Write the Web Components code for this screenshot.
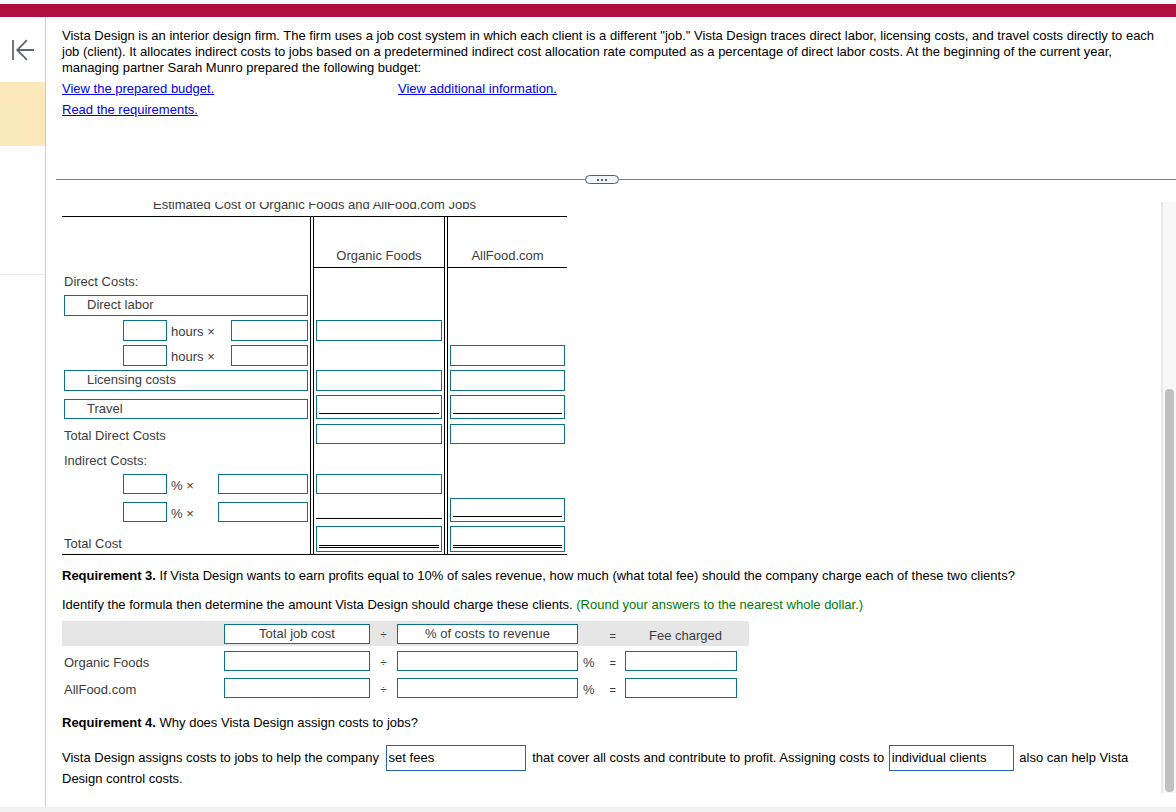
<!DOCTYPE html>
<html><head><meta charset="utf-8"><title>Vista Design</title>
<style>
html,body{margin:0;padding:0;background:#fff;height:100%;overflow:hidden}
body{font:13px/16px "Liberation Sans",Arial,sans-serif;color:#000}
a{color:#00e;text-decoration:underline}
p{margin:0}
</style></head><body>
<q-page>
  <side-rail slot="rail"></side-rail>
  <q-intro slot="intro">
    Vista Design is an interior design firm. The firm uses a job cost system in which each client is a different "job." Vista Design traces direct labor, licensing costs, and travel costs directly to each job (client). It allocates indirect costs to jobs based on a predetermined indirect cost allocation rate computed as a percentage of direct labor costs. At the beginning of the current year, managing partner Sarah Munro prepared the following budget:
  </q-intro>
  <pane-divider slot="divider"></pane-divider>

  <cost-table>
    <cost-row top="0" style="--rh:51px" head>
      <span slot="a" class="hd">Organic Foods</span><span slot="b" class="hd">AllFood.com</span>
    </cost-row>
    <cost-row style="--rh:27px"><row-label slot="l" style="--pt:6px">Direct Costs:</row-label></cost-row>
    <cost-row style="--rh:25px"><ans-box slot="l" indent style="--h:21px">Direct labor</ans-box></cost-row>
    <cost-row style="--rh:25px">
      <calc-line slot="l" unit="hours ×" style="--second:77px;--gap:64px"></calc-line>
      <ans-box slot="a" style="--h:21px"></ans-box>
    </cost-row>
    <cost-row style="--rh:25px">
      <calc-line slot="l" unit="hours ×" style="--second:77px;--gap:64px"></calc-line>
      <ans-box slot="b" style="--h:21px"></ans-box>
    </cost-row>
    <cost-row style="--rh:25px">
      <ans-box slot="l" indent style="--h:21px">Licensing costs</ans-box>
      <ans-box slot="a" style="--h:21px"></ans-box><ans-box slot="b" style="--h:21px"></ans-box>
    </cost-row>
    <cost-row style="--rh:29px">
      <ans-box slot="l" indent style="--h:20px;--mt:4px">Travel</ans-box>
      <ans-box slot="a" line="single" style="--h:24px"></ans-box><ans-box slot="b" line="single" style="--h:24px"></ans-box>
    </cost-row>
    <cost-row style="--rh:25px">
      <row-label slot="l" style="--pt:4px">Total Direct Costs</row-label>
      <ans-box slot="a" style="--h:20px"></ans-box><ans-box slot="b" style="--h:20px"></ans-box>
    </cost-row>
    <cost-row style="--rh:25px"><row-label slot="l" style="--pt:4px">Indirect Costs:</row-label></cost-row>
    <cost-row style="--rh:24px">
      <calc-line slot="l" unit="% ×" style="--second:90px;--gap:51px;--h:20px"></calc-line>
      <ans-box slot="a" style="--h:20px"></ans-box>
    </cost-row>
    <cost-row style="--rh:28px">
      <calc-line slot="l" unit="% ×" style="--second:90px;--gap:51px;--h:20px;--mt:4px"></calc-line>
      <under-rule slot="a"></under-rule>
      <ans-box slot="b" line="single" style="--h:24px"></ans-box>
    </cost-row>
    <cost-row style="--rh:29px" last>
      <row-label slot="l" style="--pt:10px">Total Cost</row-label>
      <ans-box slot="a" line="double" style="--h:26px"></ans-box><ans-box slot="b" line="double" style="--h:26px"></ans-box>
    </cost-row>
  </cost-table>

  <req-text style="--mt:13px"><b>Requirement 3.</b> If Vista Design wants to earn profits equal to 10% of sales revenue, how much (what total fee) should the company charge each of these two clients?</req-text>
  <req-text style="--mt:13px">Identify the formula then determine the amount Vista Design should charge these clients. <span style="color:#007a00">(Round your answers to the nearest whole dollar.)</span></req-text>

  <fee-table></fee-table>

  <req-text style="--mt:10px"><b>Requirement 4.</b> Why does Vista Design assign costs to jobs?</req-text>
  <req-text style="--mt:16px;--lh:21px">Vista Design assigns costs to jobs to help the company <fill-in style="--w:140px;--ml:3px;--mr:3px">set fees</fill-in> that cover all costs and contribute to profit. Assigning costs to <fill-in style="--w:125px;--ml:1px;--mr:2px">individual clients</fill-in> also can help Vista<br>Design control costs.</req-text>
</q-page>

<script>
function def(name, html, extra){
  const t=document.createElement('template');t.innerHTML=html;
  customElements.define(name,class extends HTMLElement{
    constructor(){super();this.attachShadow({mode:'open'}).appendChild(t.content.cloneNode(true));}
    connectedCallback(){extra&&extra.call(this,this.shadowRoot);}
  });
}
const TXT='#3c3c3c';

def('q-page',`<style>
:host{display:flex;flex-direction:column;width:1176px;height:812px;overflow:hidden;background:#fff}
.bar{flex:none;height:13px;margin-top:4px;background:#b01040}
.body{flex:1;display:flex;min-height:0}
.rail{flex:none;width:45px;border-right:1px solid #c9d0d8}
.main{flex:1;min-width:0;display:flex;flex-direction:column}
.scrollrow{flex:1;min-height:0;display:flex}
.content{flex:1;min-width:0;overflow:hidden;padding:0 0 0 16px}
.track{flex:none;width:15px;box-sizing:border-box;background:#f8f8f8;border-left:2px solid #e8e8e8;padding:187px 2px 2px 2px}
.thumb{height:403px;background:#c1c1c1;border-radius:4px}
.foot{flex:none;height:14px;display:block}
.bottom{flex:none;height:5px;background:#f2f2f2}
</style>
<div class="bar"></div>
<div class="body">
  <div class="rail"><slot name="rail"></slot></div>
  <div class="main">
    <slot name="intro"></slot>
    <slot name="divider"></slot>
    <div class="scrollrow">
      <div class="content"><slot></slot></div>
      <div class="track"><div class="thumb"></div></div>
    </div>
    <div class="foot"></div>
  </div>
</div>
<div class="bottom"></div>`);

def('side-rail',`<style>
:host{display:flex;flex-direction:column;height:100%}
.ic{height:65px;padding:21px 0 0 11px;box-sizing:border-box}
svg{display:block}
.mark{height:64px;background:#fbe8bb}
.gap{height:128px}
.rule{height:1px;background:#e8e8e8}
</style>
<div class="ic"><svg width="24" height="24" viewBox="0 0 24 24" fill="none" stroke="#5f6b6b" stroke-width="1.8"><path d="M2 2V22"/><path d="M23 12H6.2M16 2.2L6.2 12l9.8 9.8"/></svg></div>
<div class="mark"></div><div class="gap"></div><div class="rule"></div>`);

def('q-intro',`<style>
:host{display:block;padding:11px 16px 0 16px;height:149px;box-sizing:border-box;color:#000}
.links{display:grid;grid-template-columns:336px 1fr;margin-top:5px;row-gap:5px}
a{color:#00e;text-decoration:underline}
</style>
<div><slot></slot></div>
<div class="links"><a href="#">View the prepared budget.</a><a href="#">View additional information.</a><a href="#" style="grid-column:1">Read the requirements.</a></div>`);

def('pane-divider',`<style>
:host{display:flex;align-items:center;height:9px;padding-left:10px;margin-top:9px;margin-bottom:18px}
.l{height:1px;background:#7d8792}
.a{width:529px}.b{flex:1}
.pill{flex:none;box-sizing:border-box;width:34px;height:9px;border:1px solid #4f6072;border-radius:5px;background:#f2f5f8;display:flex;align-items:center;justify-content:center;gap:2px}
i{width:2px;height:2px;background:#4f6072;display:block}
</style><div class="l a"></div><div class="pill"><i></i><i></i><i></i></div><div class="l b"></div>`);

def('cost-table',`<style>
:host{display:block;width:505px;color:${TXT}}
.cap{height:19px;margin-top:-5px;line-height:16px;text-align:center;border-bottom:1px solid #000;box-sizing:content-box;white-space:nowrap}
</style><div class="cap">Estimated Cost of Organic Foods and AllFood.com Jobs</div><slot></slot>`);

def('cost-row',`<style>
:host{display:grid;grid-template-columns:249px 132px 120px;column-gap:2px;height:var(--rh);box-sizing:border-box}
:host([last]){border-bottom:1px solid #000}
.c{min-width:0;box-sizing:border-box}
.l{padding:0 2px;border-right:1px solid #000}
.a{border-left:1px solid #000;border-right:1px solid #000;padding:0 2px}
.b{border-left:1px solid #000;padding:0 2px}
:host([head]) .a,:host([head]) .b{display:flex;align-items:flex-end;justify-content:center;padding-bottom:3px;border-bottom:1px solid #000}
</style>
<div class="c l"><slot name="l"></slot></div><div class="c a"><slot name="a"></slot></div><div class="c b"><slot name="b"></slot></div>`);

def('row-label',`<style>:host{display:block;padding-top:var(--pt,0);line-height:16px;color:${TXT}}</style><slot></slot>`);

def('ans-box',`<style>
:host{display:flex;flex-direction:column;box-sizing:border-box;height:var(--h,21px);margin-top:var(--mt,0);border:1px solid #0f7089;background:#fff;line-height:17px;color:${TXT}}
:host([indent]){padding-left:22px}
.ln{display:none}
:host([line]) .ln{display:block;flex:1;margin:0 2px 4px}
:host([line=single]) .ln{border-bottom:1px solid #000}
:host([line=double]) .ln{border-bottom:3px double #000;margin-bottom:3px}
</style><slot></slot><div class="ln"></div>`);

def('under-rule',`<style>:host{display:block;height:20px;border-bottom:1px solid #000}</style>`);

def('calc-line',`<style>
:host{display:flex;margin-top:var(--mt,0);padding-left:59px;color:${TXT};--box:var(--h,21px)}
.s{flex:none;width:44px;height:var(--box);box-sizing:border-box;border:1px solid #0f7089}
.u{flex:none;width:var(--gap);box-sizing:border-box;padding-left:4px;line-height:24px;white-space:nowrap}
.t{flex:none;width:var(--second);height:var(--box);box-sizing:border-box;border:1px solid #0f7089}
</style><div class="s"></div><div class="u"></div><div class="t"></div>`,function(r){r.querySelector('.u').textContent=this.getAttribute('unit');});

def('req-text',`<style>:host{display:block;margin-top:var(--mt,0);line-height:var(--lh,16px);padding-right:24px;color:#000}</style><slot></slot>`);

def('fill-in',`<style>:host{display:inline-block;box-sizing:border-box;width:var(--w);height:26px;line-height:24px;border:1px solid #2a62b8;padding-left:2px;vertical-align:middle;margin:-4px var(--mr,2px) -3px var(--ml,2px);color:#000}</style><slot></slot>`);

def('fee-table',`<style>
:host{display:grid;width:687px;margin-top:8px;color:${TXT};
 grid-template-columns:162px 146px 27px 181px 47px 112px 12px;grid-auto-rows:auto;line-height:16px}
.h{background:#e6e6e6;height:25px;box-sizing:border-box}
.box{box-sizing:border-box;border:1px solid #0f7089;background:#fff;height:20px;text-align:center;line-height:17px}
.hb{height:20px;margin-top:3px}
.m{text-align:center;font-size:11px}
.r{height:27px;padding-top:3px;box-sizing:border-box;line-height:16px}
.r>.box{height:20px}
.eq{display:flex;justify-content:space-between;padding:4px 9px 0 5px;box-sizing:border-box}
.eqh{justify-content:flex-end}
.lb{padding:4px 0 0 2px}
.c{text-align:center}
.tp{padding-top:5px}
</style>
<div class="h"></div><div class="h"><div class="box hb">Total job cost</div></div><div class="h m tp">÷</div><div class="h"><div class="box hb">% of costs to revenue</div></div><div class="h eq eqh" style="padding-top:7px"><span class="m">=</span></div><div class="h c" style="padding:7px 0 0 9px">Fee charged</div><div class="h"></div>
<div style="height:5px;grid-column:1/-1"></div>
<div class="r lb">Organic Foods</div><div class="r" style="padding-top:0"><div class="box"></div></div><div class="r m">÷</div><div class="r" style="padding-top:0"><div class="box"></div></div><div class="r eq" style="height:27px"><span>%</span><span class="m">=</span></div><div class="r" style="padding-top:0"><div class="box"></div></div><div></div>
<div class="r lb">AllFood.com</div><div class="r" style="padding-top:0"><div class="box"></div></div><div class="r m">÷</div><div class="r" style="padding-top:0"><div class="box"></div></div><div class="r eq" style="height:27px"><span>%</span><span class="m">=</span></div><div class="r" style="padding-top:0"><div class="box"></div></div><div></div>`);
</script>
</body></html>
